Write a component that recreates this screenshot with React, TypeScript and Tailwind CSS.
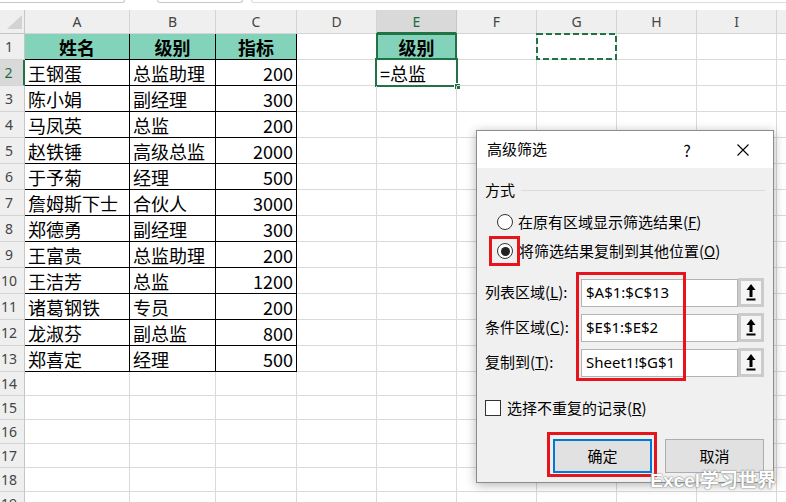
import React from "react";

const FONT = '"Noto Sans CJK SC", "Noto Sans", sans-serif';

// 表格数据：姓名 / 级别 / 指标
const DATA: [string, string, string][] = [
  ["王钢蛋", "总监助理", "200"],
  ["陈小娟", "副经理", "300"],
  ["马凤英", "总监", "200"],
  ["赵铁锤", "高级总监", "2000"],
  ["于予菊", "经理", "500"],
  ["詹姆斯下士", "合伙人", "3000"],
  ["郑德勇", "副经理", "300"],
  ["王富贵", "总监助理", "200"],
  ["王洁芳", "总监", "1200"],
  ["诸葛钢铁", "专员", "200"],
  ["龙淑芬", "副总监", "800"],
  ["郑喜定", "经理", "500"],
];

const COLS = [
  { key: "A", w: "w-[105px]" },
  { key: "B", w: "w-[86px]" },
  { key: "C", w: "w-[81px]" },
  { key: "D", w: "w-[80px]" },
  { key: "E", w: "w-[80px]" },
  { key: "F", w: "w-[80px]" },
  { key: "G", w: "w-[80px]" },
  { key: "H", w: "w-[80px]" },
  { key: "I", w: "w-[80px]" },
  { key: "J", w: "w-[100px]" },
];

function cellContent(row: number, col: number): React.ReactNode {
  if (row === 1 && col === 0) return "姓名";
  if (row === 1 && col === 1) return "级别";
  if (row === 1 && col === 2) return "指标";
  if (row >= 2 && row <= 13 && col <= 2) return DATA[row - 2][col];
  if (row === 1 && col === 4) return "级别";
  if (row === 2 && col === 4) return "=总监";
  return null;
}

function Cell({ row, col }: { row: number; col: number }) {
  const inTable = row <= 13 && col <= 2;
  const teal = (row === 1 && col <= 2) || (row === 1 && col === 4);
  const num = row >= 2 && row <= 13 && col === 2;
  const height = row <= 13 ? "h-[26px]" : "h-[24px]";
  const content = cellContent(row, col);

  return (
    <div
      className={`relative shrink-0 ${COLS[col].w} ${height} border-r border-b flex items-center px-[3px] text-[18px] leading-none text-black ${
        inTable ? "border-black" : "border-[#dadada]"
      } ${teal ? "bg-[#83d3bb] justify-center font-bold" : ""} ${num ? "justify-end" : ""}`}
    >
      {content}
      {/* E1 绿色边框 */}
      {row === 1 && col === 4 && (
        <div className="absolute -top-px -left-px right-[-1px] bottom-0 border-2 border-b-0 border-[#217346]" />
      )}
      {/* E2 活动单元格 */}
      {row === 2 && col === 4 && (
        <>
          <div className="absolute -top-[2px] -left-[2px] right-[-2px] bottom-[-2px] border-2 border-[#217346]" />
          <div className="absolute right-[-5px] bottom-[-5px] w-[7px] h-[7px] bg-[#217346] border border-white" />
        </>
      )}
      {/* G1 复制区虚线框 */}
      {row === 1 && col === 6 && (
        <svg className="absolute -top-px -left-px" width="81" height="27">
          <rect x="1" y="1" width="79" height="25" fill="none" stroke="#217346" strokeWidth="2" strokeDasharray="6 3" />
        </svg>
      )}
    </div>
  );
}

function UpButton() {
  return (
    <div className="w-[26px] h-[29px] border-[3px] border-[#cbcbcb] bg-[#f5f5f5] flex items-center justify-center">
      <svg width="10" height="17" viewBox="0 0 10 17">
        <polygon points="5,0 0.5,6 9.5,6" fill="#000" />
        <rect x="3.5" y="5" width="3" height="8" fill="#000" />
        <rect x="0.5" y="14.5" width="9" height="2" fill="#000" />
      </svg>
    </div>
  );
}

function Field({ label, hot, value }: { label: string; hot: string; value: string }) {
  return (
    <div className="flex items-center h-[29px]">
      <span className="w-[104px] pl-[8px] text-[15px] text-black">
        {label}(<span className="underline">{hot}</span>):
      </span>
      <div
        className="w-[157px] h-[28px] bg-white border border-[#b4b4b4] flex items-center pl-[4px] text-[15px] text-black"
        style={{ fontFamily: '"Noto Sans", sans-serif' }}
      >
        {value}
      </div>
      <UpButton />
    </div>
  );
}

function Dialog() {
  return (
    <div className="absolute left-[476px] top-[130px] w-[298px] h-[353px] border border-[#8c8c8c] bg-[#f0f0f0] shadow-[0_2px_10px_rgba(0,0,0,0.3)] flex flex-col">
      {/* 标题栏 */}
      <div className="h-[37px] shrink-0 bg-white flex items-center pl-[10px]">
        <span className="text-[15px] text-black">高级筛选</span>
        <span className="ml-auto w-[12px] text-center text-[16px] text-black">?</span>
        <svg className="ml-[44px] mr-[24px]" width="12" height="12" viewBox="0 0 12 12">
          <path d="M0.5 0.5 L11.5 11.5 M11.5 0.5 L0.5 11.5" stroke="#000" strokeWidth="1.1" />
        </svg>
      </div>

      <div className="flex flex-col pt-[12px] text-[15px] text-black">
        <div className="flex items-center h-[20px] pl-[8px] pr-[8px]">
          <span>方式</span>
          <div className="flex-1 h-px bg-[#dcdcdc] ml-[6px]" />
        </div>

        <div className="flex items-center h-[24px] mt-[10px] pl-[20px]">
          <span className="w-[16px] h-[16px] rounded-full border border-[#333] bg-white" />
          <span className="ml-[5px]">
            在原有区域显示筛选结果(<span className="underline">F</span>)
          </span>
        </div>
        <div className="flex items-center h-[24px] mt-[5px] pl-[20px]">
          <span className="w-[16px] h-[16px] rounded-full border border-[#333] bg-white flex items-center justify-center">
            <span className="w-[9px] h-[9px] rounded-full bg-[#222]" />
          </span>
          <span className="ml-[6px]">
            将筛选结果复制到其他位置(<span className="underline">O</span>)
          </span>
        </div>

        <div className="flex flex-col gap-[6px] mt-[15px]">
          <Field label="列表区域" hot="L" value="$A$1:$C$13" />
          <Field label="条件区域" hot="C" value="$E$1:$E$2" />
          <Field label="复制到" hot="T" value="Sheet1!$G$1" />
        </div>

        <div className="flex items-center h-[16px] mt-[23px] pl-[8px]">
          <span className="w-[16px] h-[16px] border border-[#333] bg-white" />
          <span className="ml-[6px]">
            选择不重复的记录(<span className="underline">R</span>)
          </span>
        </div>

        <div className="flex justify-end gap-[13px] mt-[23px] pr-[9px]">
          <div className="w-[99px] h-[34px] border-2 border-[#0078d7] bg-[#e1e1e1] flex items-center justify-center">
            确定
          </div>
          <div className="w-[99px] h-[34px] border border-[#adadad] bg-[#e1e1e1] flex items-center justify-center">
            取消
          </div>
        </div>
      </div>

      {/* 红色标注框 */}
      <div className="absolute left-[12px] top-[105px] w-[31px] h-[30px] border-[3px] border-[#e8141c]" />
      <div className="absolute left-[99px] top-[141px] w-[110px] h-[109px] border-[3px] border-[#e8141c]" />
      <div className="absolute left-[70px] top-[301px] w-[110px] h-[45px] border-[3px] border-[#e8141c]" />
    </div>
  );
}

export default function App() {
  const rows = Array.from({ length: 19 }, (_, i) => i + 1);
  return (
    <div className="relative w-[786px] h-[502px] overflow-hidden bg-white" style={{ fontFamily: FONT }}>
      {/* 编辑栏残留 */}
      <div className="h-[10px] flex">
        <div className="w-[125px] h-[3px] border-b border-r border-[#c8c8c8] rounded-br-[3px]" />
        <div className="ml-[32px] w-[86px] h-[3px] border-b border-x border-[#c8c8c8] rounded-b-[3px]" />
        <div className="ml-[8px] flex-1 h-[3px] border-b border-l border-[#dcdcdc] rounded-bl-[3px]" />
      </div>

      {/* 列标题 */}
      <div className="flex h-[24px]">
        <div className="shrink-0 w-[25px] h-[24px] bg-[#efefef] border-r border-b border-[#c6c6c6] relative">
          <svg className="absolute left-[7px] top-[5px]" width="15" height="14">
            <polygon points="15,0 15,14 0,14" fill="#d3d3d3" />
          </svg>
        </div>
        {COLS.map((c) => (
          <div
            key={c.key}
            className={`shrink-0 ${c.w} h-[24px] flex items-center justify-center text-[14px] ${
              c.key === "E"
                ? "bg-[#d9d9d9] text-[#1e6b41] border-r border-[#c6c6c6] border-b-2 border-b-[#217346]"
                : "bg-[#efefef] text-[#444] border-r border-b border-[#d4d4d4]"
            }`}
            style={{ fontFamily: '"Noto Sans", sans-serif' }}
          >
            {c.key === "J" ? "" : c.key}
          </div>
        ))}
      </div>

      {/* 数据行 */}
      {rows.map((r) => (
        <div key={r} className="flex">
          <div
            className={`shrink-0 w-[25px] ${r <= 13 ? "h-[26px]" : "h-[24px]"} flex items-center justify-center pr-[6px] text-[14px] border-b border-[#d4d4d4] ${
              r === 2
                ? "bg-[#d9d9d9] text-[#1e6b41] border-r-2 border-r-[#217346]"
                : "bg-[#efefef] text-[#444] border-r border-r-[#c6c6c6]"
            }`}
            style={{ fontFamily: '"Noto Sans", sans-serif' }}
          >
            {r}
          </div>
          {COLS.map((c, ci) => (
            <Cell key={c.key} row={r} col={ci} />
          ))}
        </div>
      ))}

      <Dialog />

      {/* 水印 */}
      <div
        className="absolute right-[10px] top-[470px] text-[19px] leading-[22px] font-bold text-white [text-shadow:0_0_1px_#666,0_0_2px_#888]"
        style={{ fontFamily: '"Liberation Sans", "Noto Sans CJK SC", sans-serif' }}
      >
        Excel学习世界
      </div>
    </div>
  );
}
